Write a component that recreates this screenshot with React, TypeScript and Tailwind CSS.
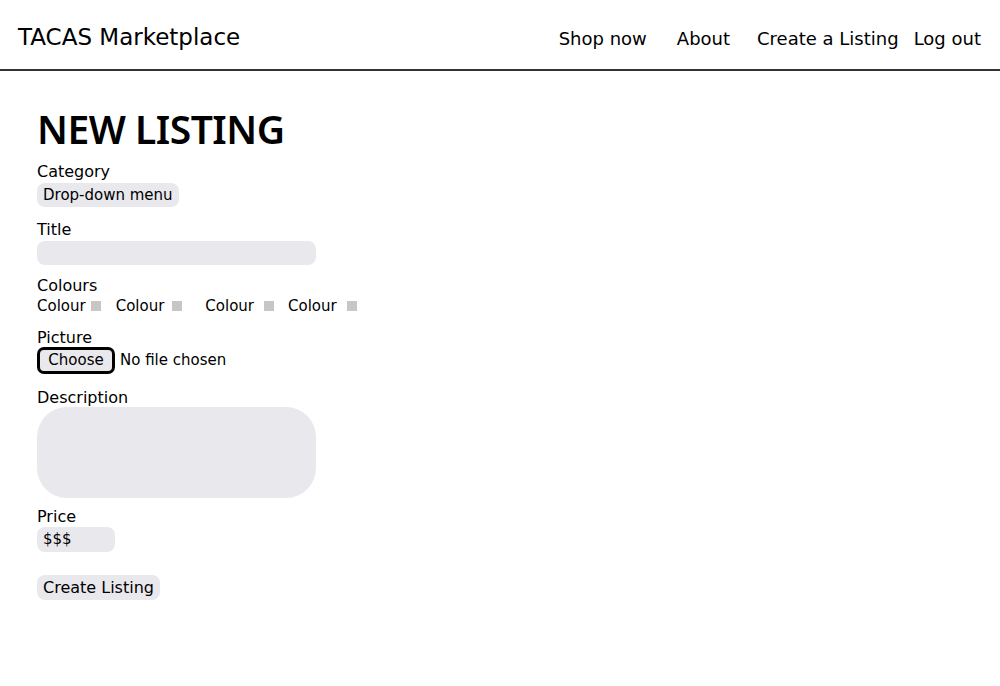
import React from 'react';

const navLinks = ['Shop now', 'About', 'Create a Listing', 'Log out'];

const Label = ({ children }: { children: React.ReactNode }) => (
    <div className="text-[16px] leading-[20px] text-black">{children}</div>
);

const App = () => {
    return (
        <div className="min-h-[686px] bg-white text-black" style={{ fontFamily: '"DejaVu Sans", "Noto Sans", sans-serif' }}>
            <header className="flex items-center h-[71px] pl-[18px] pr-[19px] pt-[5px] border-b-2 border-[#333333]">
                <h1 className="text-[23px] font-normal">TACAS Marketplace</h1>
                <nav className="ml-auto flex items-center text-[18px] mt-[3px]">
                    <a className="mr-[30px]">{navLinks[0]}</a>
                    <a className="mr-[27px]">{navLinks[1]}</a>
                    <a className="mr-[15px]">{navLinks[2]}</a>
                    <a>{navLinks[3]}</a>
                </nav>
            </header>

            <main className="pl-[37px] pt-[34px]">
                <h2
                    className="text-[39px] leading-[48px] font-semibold tracking-[-0.5px]"
                    style={{ fontFamily: '"Noto Sans", sans-serif' }}
                >
                    NEW LISTING
                </h2>

                <div className="mt-[9px]">
                    <Label>Category</Label>
                    <div className="mt-[1px] inline-flex items-center h-[24px] px-[6px] rounded-[8px] bg-[#e9e8ed] text-[15px]">
                        Drop-down menu
                    </div>
                </div>

                <div className="mt-[13px]">
                    <Label>Title</Label>
                    <div className="mt-[1px] w-[279px] h-[24px] rounded-[8px] bg-[#e9e8ed]" />
                </div>

                <div className="mt-[11px]">
                    <Label>Colours</Label>
                    <div className="flex items-center text-[15px] leading-[20px]">
                        <span>Colour</span>
                        <span className="ml-[5px] w-[10px] h-[10px] bg-[#c6c6c6]" />
                        <span className="ml-[15px]">Colour</span>
                        <span className="ml-[8px] w-[10px] h-[10px] bg-[#c6c6c6]" />
                        <span className="ml-[23px]">Colour</span>
                        <span className="ml-[10px] w-[10px] h-[10px] bg-[#c6c6c6]" />
                        <span className="ml-[14px]">Colour</span>
                        <span className="ml-[10px] w-[10px] h-[10px] bg-[#c6c6c6]" />
                    </div>
                </div>

                <div className="mt-[12px]">
                    <Label>Picture</Label>
                    <div className="flex items-center mt-[-1px]">
                        <div className="flex items-center justify-center w-[78px] h-[27px] border-[3px] border-black rounded-[7px] bg-[#e9e8ed] text-[15px]">
                            Choose
                        </div>
                        <span className="ml-[5px] text-[15px]">No file chosen</span>
                    </div>
                </div>

                <div className="mt-[14px]">
                    <Label>Description</Label>
                    <div className="mt-[-1px] w-[279px] h-[91px] rounded-[30px] bg-[#e9e8ed]" />
                </div>

                <div className="mt-[9px]">
                    <Label>Price</Label>
                    <div className="flex items-center w-[78px] h-[25px] px-[6px] rounded-[8px] bg-[#e9e8ed] text-[15px]">
                        $$$
                    </div>
                </div>

                <button className="mt-[23px] h-[25px] px-[6px] rounded-[8px] bg-[#e9e8ed] text-[16px] leading-[25px]">
                    Create Listing
                </button>
            </main>
        </div>
    );
};

export default App;
